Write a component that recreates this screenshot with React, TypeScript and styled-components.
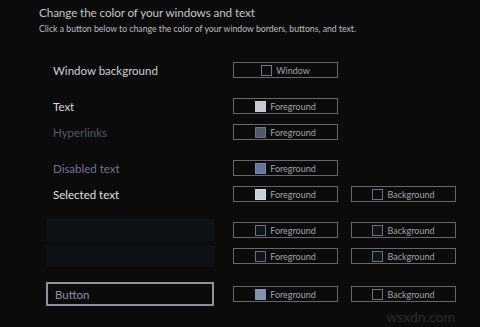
import styled, { createGlobalStyle } from "styled-components";

const GlobalStyle = createGlobalStyle`
  html, body {
    margin: 0;
    padding: 0;
    background: #0b0b0c;
  }
  body {
    font-family: Lato, "Open Sans", sans-serif;
  }
`;

const Page = styled.div`
  position: relative;
  width: 480px;
  height: 327px;
  overflow: hidden;
  background: #0b0b0c;
  box-sizing: border-box;
  padding: 3px 0 0 0;
`;

const Header = styled.header`
  padding-left: 39px;
`;

const Title = styled.h1`
  margin: 0;
  font-size: 11.7px;
  line-height: 18px;
  font-weight: 400;
  letter-spacing: -0.1px;
  color: #c4c4c6;
`;

const Subtitle = styled.p`
  margin: 2px 0 0 0;
  font-size: 8.7px;
  line-height: 12px;
  color: #bdbdc0;
`;

const Rows = styled.div`
  display: flex;
  flex-direction: column;
  padding-left: 46px;
  margin-top: 24px;
`;

// label column, then each button sits at the right end of its column
const Row = styled.div<{ $top: number; $h?: number }>`
  display: grid;
  grid-template-columns: 168px 124px 118px;
  align-items: center;
  height: ${(p) => p.$h ?? 22}px;
  margin-top: ${(p) => p.$top}px;
`;

const Label = styled.div<{ $color: string }>`
  height: 100%;
  display: flex;
  align-items: center;
  padding-left: 7px;
  font-size: 11.5px;
  color: ${(p) => p.$color};
`;

const DarkBox = styled.div`
  height: 100%;
  background: #0e1115;
`;

const ButtonBox = styled.div`
  height: 100%;
  box-sizing: border-box;
  border: 2px solid #8e929c;
  display: flex;
  align-items: center;
  padding-left: 7px;
  font-size: 11.5px;
  color: #8b90a0;
`;

const ColorButton = styled.div`
  justify-self: end;
  width: 105px;
  height: 16px;
  box-sizing: border-box;
  border: 1px solid #66666c;
  display: flex;
  align-items: center;
  justify-content: center;
  gap: 4px;
  font-size: 9px;
  color: #a0a1a8;
`;

const Swatch = styled.span<{ $fill: string; $edge?: string }>`
  width: 11px;
  height: 11px;
  box-sizing: border-box;
  background: ${(p) => p.$fill};
  border: 1px solid ${(p) => p.$edge ?? "#6d6f76"};
`;

const Watermark = styled.div`
  position: absolute;
  right: 25px;
  bottom: 2px;
  font-size: 14px;
  color: #2b2b2d;
`;

function Pick({ fill, edge, text }: { fill: string; edge?: string; text: string }) {
  return (
    <ColorButton>
      <Swatch $fill={fill} $edge={edge} />
      {text}
    </ColorButton>
  );
}

export default function App() {
  return (
    <>
      <GlobalStyle />
      <Page>
        <Header>
          <Title>Change the color of your windows and text</Title>
          <Subtitle>Click a button below to change the color of your window borders, buttons, and text.</Subtitle>
        </Header>

        <Rows>
          <Row $top={0}>
            <Label $color="#cfcfd2">Window background</Label>
            <Pick fill="#0c0c0e" edge="#76767c" text="Window" />
          </Row>

          <Row $top={14}>
            <Label $color="#d6d6d8">Text</Label>
            <Pick fill="#c8c9cc" edge="#c8c9cc" text="Foreground" />
          </Row>

          <Row $top={4}>
            <Label $color="#4c5a6e">Hyperlinks</Label>
            <Pick fill="#4e5a6b" edge="#6b7380" text="Foreground" />
          </Row>

          <Row $top={14}>
            <Label $color="#6a7592">Disabled text</Label>
            <Pick fill="#66779c" edge="#7c88a4" text="Foreground" />
          </Row>

          <Row $top={4}>
            <Label $color="#e0e0e2">Selected text</Label>
            <Pick fill="#c8ced8" edge="#d4d8e0" text="Foreground" />
            <Pick fill="#0c0c0e" edge="#6d6f76" text="Background" />
          </Row>

          <Row $top={14}>
            <DarkBox />
            <Pick fill="#10151c" edge="#6d6f76" text="Foreground" />
            <Pick fill="#10151c" edge="#6d6f76" text="Background" />
          </Row>

          <Row $top={4}>
            <DarkBox />
            <Pick fill="#10151c" edge="#6d6f76" text="Foreground" />
            <Pick fill="#10151c" edge="#6d6f76" text="Background" />
          </Row>

          <Row $top={15} $h={24}>
            <ButtonBox>Button</ButtonBox>
            <Pick fill="#8592ad" edge="#8592ad" text="Foreground" />
            <Pick fill="#0c0c0e" edge="#6d6f76" text="Background" />
          </Row>
        </Rows>

        <Watermark>wsxdn.com</Watermark>
      </Page>
    </>
  );
}
